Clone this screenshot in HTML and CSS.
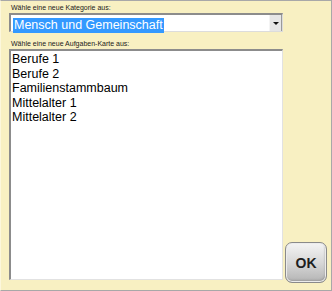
FILE: index.html
```html
<!DOCTYPE html>
<html lang="de">
<head>
<meta charset="UTF-8">
<meta name="viewport" content="width=device-width, initial-scale=1.0">
<link rel="stylesheet" href="styles.css">
<title>Karte wählen</title>
</head>
<body>

<div class="window">
    <div class="main">
        <div class="caption">Wähle eine neue Kategorie aus:</div>
        <div class="combo">
            <div class="combo-value"><span class="selected">Mensch und Gemeinschaft</span></div>
            <div class="combo-arrow"><span class="arrow"></span></div>
        </div>
        <div class="caption second">Wähle eine neue Aufgaben-Karte aus:</div>
        <div class="listbox">
            <div class="item">Berufe 1</div>
            <div class="item">Berufe 2</div>
            <div class="item">Familienstammbaum</div>
            <div class="item">Mittelalter 1</div>
            <div class="item">Mittelalter 2</div>
        </div>
    </div>
    <div class="side">
        <button type="button" class="ok-btn">OK</button>
    </div>
</div>

</body>
</html>
```

FILE: styles.css
```css
body {
    margin: 0;
    font-family: "Liberation Sans", Arial, sans-serif;
}

.window {
    width: 332px;
    height: 291px;
    box-sizing: border-box;
    display: flex;
    padding: 2px 4px 7px 8px;
    background-color: #f8f0c2; /* фон окна */
    border-top: 1px solid #a8a8a8;
    border-right: 1px solid #a8a8a8;
    border-bottom: 1px solid #a8a8a8;
    border-left: 1px solid #fcf7dc;
}

.main {
    width: 274px;
    display: flex;
    flex-direction: column;
}

.caption {
    font-size: 7px;
    line-height: 10px;
    height: 10px;
    padding-left: 2px;
    color: #1a1a1a;
}

.caption.second {
    margin-top: 7px;
}

.combo {
    height: 19px;
    box-sizing: border-box;
    display: flex;
    background-color: #fff;
    border-top: 2px solid #8c8c8c;
    border-left: 2px solid #8c8c8c;
    border-right: 1px solid #dcdcdc;
    border-bottom: 1px solid #dcdcdc;
}

.combo-value {
    flex: 1;
    padding: 0 2px;
}

.selected {
    display: inline-block;
    background-color: #3399ff;
    color: #fff;
    font-size: 12.5px;
    line-height: 15px;
    padding: 0 1px;
}

.combo-arrow {
    width: 11px;
    background-color: #e6e6e6;
    border-left: 1px solid #f4f4f4;
    border-right: 1px solid #9a9a9a;
    display: flex;
    align-items: center;
    justify-content: center;
}

.arrow {
    width: 0;
    height: 0;
    border-left: 3px solid transparent;
    border-right: 3px solid transparent;
    border-top: 3px solid #111;
}

.listbox {
    flex: 1;
    margin-bottom: 3px;
    padding: 1px 1px;
    background-color: #fff;
    border-top: 2px solid #8c8c8c;
    border-left: 2px solid #8c8c8c;
    border-right: 1px solid #e2e2e2;
    border-bottom: 1px solid #e2e2e2;
}

.item {
    font-size: 12.5px;
    line-height: 14.5px;
    color: #000;
}

.side {
    width: 42px;
    margin-left: 2px;
    display: flex;
    align-items: flex-end;
}

.ok-btn {
    width: 42px;
    height: 41px;
    padding: 0;
    border: 1px solid #8a8a8a;
    border-radius: 7px;
    background: linear-gradient(#f4f4f4, #d8d8d8 50%, #b4b4b4);
    box-shadow: inset 0 0 0 1px #ececec, inset -1px -2px 2px #9c9c9c;
    font-family: "Liberation Sans", Arial, sans-serif;
    font-weight: bold;
    font-size: 14px;
    color: #1e1e1e;
    cursor: pointer;
}
```
